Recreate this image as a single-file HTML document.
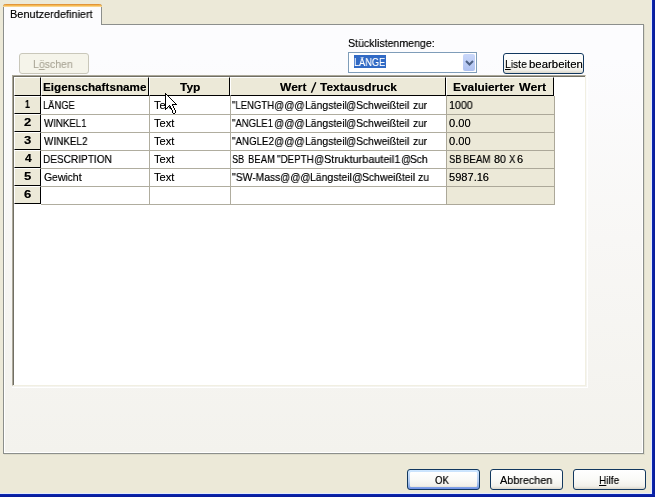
<!DOCTYPE html>
<html>
<head>
<meta charset="utf-8">
<title>Benutzerdefiniert</title>
<style>
html,body{margin:0;padding:0;}
body{width:655px;height:497px;overflow:hidden;position:relative;background:#ECE9D8;font-family:"Liberation Sans",sans-serif;font-size:11px;color:#000;}
.abs{position:absolute;}
.t{position:absolute;white-space:nowrap;line-height:13px;height:13px;transform-origin:0 0;will-change:transform;text-shadow:0 0 0 rgba(0,0,0,.55);}
.b{font-weight:bold;}
u{text-decoration:underline;}
/* window frame */
#fr{left:652px;top:0;width:3px;height:497px;background:linear-gradient(to right,#0c2cb8,#0a1fa0,#0a1c98);}
#fb{left:0;top:494px;width:655px;height:3px;background:linear-gradient(to bottom,#0c2cb8,#0a1fa0,#0a1c98);}
#lr{left:651px;top:0;width:1px;height:494px;background:#e4eafc;}
#lb{left:0;top:493px;width:652px;height:1px;background:#e4eafc;}
/* tab pane */
#pane{left:3px;top:24px;width:639px;height:428px;border:1px solid #8C8F8C;background:linear-gradient(to bottom,#FCFCFE 0%,#FCFCFE 8%,#F8F7F5 50%,#F3F2ED 100%);box-shadow:inset 1px 0 0 #fff,inset -1px 0 0 #fff,inset 0 -1px 0 #fff,1px 1px 0 rgba(120,130,110,0.12);}
#tab{left:3px;top:4px;width:97px;height:21px;border:1px solid #8C8F8C;border-bottom:none;border-top:none;background:#FCFCFE;border-radius:3px 3px 0 0;}
#tabtop{left:3px;top:4px;width:99px;height:3px;border-radius:3px 3px 0 0;background:linear-gradient(to bottom,#E2953A 0,#E2953A 1px,#F5B850 1px,#F5B850 2px,#FAD48C 2px,#FAD48C 3px);}
/* xp buttons */
.btn{position:absolute;box-sizing:border-box;border:1px solid #12385F;border-radius:3px;background:linear-gradient(to bottom,#FFFFFF 0%,#FAFAF7 50%,#F1F0EA 85%,#DAD6CA 100%);}
.btn.dis{border-color:#C9C7BA;background:#F5F4EA;}
.btn.def{background:linear-gradient(to bottom,#CEE7FF 0%,#C2DAF8 30%,#B4CDF3 60%,#8CAEE6 85%,#6F8FE6 100%);}
.btn.def i{position:absolute;left:2px;top:2px;right:2px;bottom:2px;border-radius:1px;background:linear-gradient(to bottom,#FFFFFF 0%,#FAFAF7 50%,#F1F0EA 90%,#E6E3DA 100%);}
/* combo */
#combo{left:348px;top:52px;width:127px;height:19px;border:1px solid #7F9DB9;background:#fff;}
#sel{left:354px;top:55px;width:32px;height:13px;background:#316AC5;}
#dd{left:463px;top:54px;width:12px;height:17px;border-radius:2px;background:linear-gradient(to bottom,#C9D7FA 0%,#BDCDF5 50%,#AEC1F0 100%);}
/* grid */
#gridbox{left:12px;top:75px;width:574px;height:311px;background:#fff;border-left:1px solid #ACA899;border-top:1px solid #ACA899;border-right:1px solid #F1EFE2;border-bottom:1px solid #F1EFE2;box-sizing:border-box;}
#gridin{left:13px;top:76px;width:572px;height:309px;border-left:1px solid #716F64;border-top:1px solid #716F64;box-sizing:border-box;}
#gridout{left:12px;top:75px;width:575px;height:312px;border-right:1px solid #fff;border-bottom:1px solid #fff;box-sizing:content-box;}
.hc{position:absolute;background:#ECE9D8;box-sizing:border-box;border-top:1px solid #fff;border-left:1px solid #fff;border-right:1px solid #000;border-bottom:1px solid #000;}
.vl{position:absolute;width:1px;background:#B0AD9F;}
.hl{position:absolute;height:1px;background:#B0AD9F;}
.ev{position:absolute;background:#ECE9D8;}
.gl{position:absolute;background:#ACA899;}
</style>
</head>
<body>
<div id="fr" class="abs"></div>
<div id="fb" class="abs"></div>
<div id="lr" class="abs"></div>
<div id="lb" class="abs"></div>

<div id="pane" class="abs"></div>
<div id="tab" class="abs"></div>
<div id="tabtop" class="abs"></div>

<!-- Löschen (disabled) -->
<div class="btn dis" style="left:19px;top:53px;width:70px;height:21px;"></div>

<!-- combo -->
<div id="combo" class="abs"></div>
<div id="sel" class="abs"></div>
<div id="dd" class="abs"></div>
<svg class="abs" style="left:463px;top:54px" width="12" height="17" viewBox="0 0 12 17"><path d="M3 7 L6.5 10.5 L10 7" fill="none" stroke="#4D6185" stroke-width="2"/></svg>

<!-- Liste bearbeiten -->
<div class="btn" style="left:503px;top:53px;width:81px;height:21px;"></div>

<!-- grid -->
<div id="gridbox" class="abs"></div>
<div id="gridin" class="abs"></div>
<div id="gridout" class="abs"></div>
<div id="grid" class="abs" style="left:0;top:0;">
<!-- evaluated column bg -->
<div class="ev" style="left:446px;top:96px;width:108px;height:108px;"></div>
<!-- horizontal lines body -->
<div class="hl" style="left:41px;top:114px;width:405px;"></div>
<div class="hl" style="left:41px;top:132px;width:405px;"></div>
<div class="hl" style="left:41px;top:150px;width:405px;"></div>
<div class="hl" style="left:41px;top:168px;width:405px;"></div>
<div class="hl" style="left:41px;top:186px;width:405px;"></div>
<div class="hl" style="left:41px;top:204px;width:405px;"></div>
<div class="vl" style="left:149px;top:96px;height:109px;"></div>
<div class="vl" style="left:230px;top:96px;height:109px;"></div>
<!-- evaluated col lines -->
<div class="gl" style="left:446px;top:96px;width:1px;height:109px;"></div>
<div class="gl" style="left:554px;top:96px;width:1px;height:109px;"></div>
<div class="gl" style="left:446px;top:114px;width:109px;height:1px;"></div>
<div class="gl" style="left:446px;top:132px;width:109px;height:1px;"></div>
<div class="gl" style="left:446px;top:150px;width:109px;height:1px;"></div>
<div class="gl" style="left:446px;top:168px;width:109px;height:1px;"></div>
<div class="gl" style="left:446px;top:186px;width:109px;height:1px;"></div>
<div class="gl" style="left:446px;top:204px;width:109px;height:1px;"></div>
<!-- header cells -->
<div class="hc" style="left:14px;top:77px;width:27px;height:19px;"></div>
<div class="hc" style="left:41px;top:77px;width:108px;height:19px;"></div>
<div class="hc" style="left:149px;top:77px;width:81px;height:19px;"></div>
<div class="hc" style="left:230px;top:77px;width:216px;height:19px;"></div>
<div class="hc" style="left:446px;top:77px;width:108px;height:19px;"></div>
<!-- row headers -->
<div class="hc" style="left:14px;top:96px;width:27px;height:18px;"></div>
<div class="hc" style="left:14px;top:114px;width:27px;height:18px;"></div>
<div class="hc" style="left:14px;top:132px;width:27px;height:18px;"></div>
<div class="hc" style="left:14px;top:150px;width:27px;height:18px;"></div>
<div class="hc" style="left:14px;top:168px;width:27px;height:18px;"></div>
<div class="hc" style="left:14px;top:186px;width:27px;height:18px;"></div>
</div>

<!-- bottom buttons -->
<div class="btn def" style="left:407px;top:469px;width:73px;height:21px;"><i></i></div>
<div class="btn" style="left:490px;top:469px;width:73px;height:21px;"></div>
<div class="btn" style="left:573px;top:469px;width:73px;height:21px;"></div>

<svg class="abs" style="left:308px;top:80px" width="12" height="16" viewBox="0 0 12 16"><path d="M3.4 12.8 L7.8 2.2" stroke="#000" stroke-width="1.4" fill="none"/></svg>
<div class="t" style="left:10.25px;top:8px;transform:scaleX(0.9939);">Benutzerdefiniert</div>
<div class="t" style="left:32.78px;top:58px;transform:scaleX(0.9565);color:#ACA899;text-shadow:0 0 0 #ACA89988;">L<u>ö</u>schen</div>
<div class="t" style="left:347.72px;top:37px;transform:scaleX(0.9650);">Stücklistenmenge:</div>
<div class="t" style="left:354.38px;top:56px;transform:scaleX(0.8333);color:#ffffff;text-shadow:0 0 0 #ffffff88;">LÄNGE</div>
<div class="t" style="left:505.00px;top:58px;transform:scaleX(0.9363);"><u>L</u>iste</div>
<div class="t" style="left:528.62px;top:58px;transform:scaleX(1.0356);">bearbeiten</div>
<div class="t b" style="left:43.20px;top:81px;transform:scaleX(1.0646);">Eigenschaftsname</div>
<div class="t b" style="left:180.20px;top:81px;transform:scaleX(1.0849);">Typ</div>
<div class="t b" style="left:280.30px;top:81px;transform:scaleX(1.0928);">Wert</div>
<div class="t b" style="left:320.20px;top:81px;transform:scaleX(1.0883);">Textausdruck</div>
<div class="t b" style="left:453.19px;top:81px;transform:scaleX(1.0804);">Evaluierter</div>
<div class="t b" style="left:518.70px;top:81px;transform:scaleX(1.1216);">Wert</div>
<div class="t b" style="left:25.40px;top:98px;transform:scaleX(0.8000);">1</div>
<div class="t b" style="left:24.30px;top:116px;transform:scaleX(1.1818);">2</div>
<div class="t b" style="left:24.30px;top:134px;transform:scaleX(1.1818);">3</div>
<div class="t b" style="left:24.60px;top:152px;transform:scaleX(1.0833);">4</div>
<div class="t b" style="left:24.30px;top:170px;transform:scaleX(1.1818);">5</div>
<div class="t b" style="left:24.30px;top:188px;transform:scaleX(1.1818);">6</div>
<div class="t" style="left:43.36px;top:99px;transform:scaleX(0.8500);">LÄNGE</div>
<div class="t" style="left:44.00px;top:117px;transform:scaleX(0.8796);">WINKEL1</div>
<div class="t" style="left:44.00px;top:135px;transform:scaleX(0.9005);">WINKEL2</div>
<div class="t" style="left:43.31px;top:153px;transform:scaleX(0.9156);">DESCRIPTION</div>
<div class="t" style="left:43.53px;top:171px;transform:scaleX(0.9427);">Gewicht</div>
<div class="t" style="left:153.75px;top:99px;transform:scaleX(1.0150);">Text</div>
<div class="t" style="left:153.75px;top:117px;transform:scaleX(1.0150);">Text</div>
<div class="t" style="left:153.75px;top:135px;transform:scaleX(1.0150);">Text</div>
<div class="t" style="left:153.75px;top:153px;transform:scaleX(1.0150);">Text</div>
<div class="t" style="left:153.75px;top:171px;transform:scaleX(1.0150);">Text</div>
<div class="t" style="left:232.37px;top:99px;transform:scaleX(0.8677);">"LENGTH</div>
<div class="t" style="left:274.11px;top:99px;transform:scaleX(0.9165);">@@@</div>
<div class="t" style="left:304.59px;top:99px;transform:scaleX(0.9482);">Längsteil</div>
<div class="t" style="left:346.31px;top:99px;transform:scaleX(0.9158);">@</div>
<div class="t" style="left:356.43px;top:99px;transform:scaleX(0.9491);">Schweißteil</div>
<div class="t" style="left:412.54px;top:99px;transform:scaleX(0.9288);">zur</div>
<div class="t" style="left:232.37px;top:117px;transform:scaleX(0.8670);">"ANGLE1</div>
<div class="t" style="left:274.11px;top:117px;transform:scaleX(0.9165);">@@@</div>
<div class="t" style="left:304.59px;top:117px;transform:scaleX(0.9482);">Längsteil</div>
<div class="t" style="left:346.31px;top:117px;transform:scaleX(0.9158);">@</div>
<div class="t" style="left:356.43px;top:117px;transform:scaleX(0.9491);">Schweißteil</div>
<div class="t" style="left:412.54px;top:117px;transform:scaleX(0.9288);">zur</div>
<div class="t" style="left:232.36px;top:135px;transform:scaleX(0.8865);">"ANGLE2</div>
<div class="t" style="left:274.11px;top:135px;transform:scaleX(0.9165);">@@@</div>
<div class="t" style="left:304.59px;top:135px;transform:scaleX(0.9482);">Längsteil</div>
<div class="t" style="left:346.31px;top:135px;transform:scaleX(0.9158);">@</div>
<div class="t" style="left:356.43px;top:135px;transform:scaleX(0.9491);">Schweißteil</div>
<div class="t" style="left:412.54px;top:135px;transform:scaleX(0.9288);">zur</div>
<div class="t" style="left:232.39px;top:153px;transform:scaleX(0.8296);">SB</div>
<div class="t" style="left:247.65px;top:153px;transform:scaleX(0.8644);">BEAM</div>
<div class="t" style="left:277.45px;top:153px;transform:scaleX(0.8906);">"DEPTH</div>
<div class="t" style="left:313.51px;top:153px;transform:scaleX(0.9158);">@</div>
<div class="t" style="left:323.80px;top:153px;transform:scaleX(0.9908);">Strukturbauteil1</div>
<div class="t" style="left:400.51px;top:153px;transform:scaleX(0.9158);">@</div>
<div class="t" style="left:410.14px;top:153px;transform:scaleX(0.9296);">Sch</div>
<div class="t" style="left:232.33px;top:171px;transform:scaleX(0.9426);">"SW-Mass</div>
<div class="t" style="left:280.31px;top:171px;transform:scaleX(0.9165);">@@@</div>
<div class="t" style="left:310.49px;top:171px;transform:scaleX(0.9529);">Längsteil</div>
<div class="t" style="left:351.98px;top:171px;transform:scaleX(0.9579);">@</div>
<div class="t" style="left:362.23px;top:171px;transform:scaleX(0.9455);">Schweißteil</div>
<div class="t" style="left:418.42px;top:171px;transform:scaleX(0.9524);">zu</div>
<div class="t" style="left:449.27px;top:99px;transform:scaleX(0.9720);">1000</div>
<div class="t" style="left:449.00px;top:117px;transform:scaleX(1.0098);">0.00</div>
<div class="t" style="left:449.00px;top:135px;transform:scaleX(1.0098);">0.00</div>
<div class="t" style="left:448.57px;top:153px;transform:scaleX(0.8667);">SB</div>
<div class="t" style="left:463.14px;top:153px;transform:scaleX(0.8814);">BEAM</div>
<div class="t" style="left:493.51px;top:153px;transform:scaleX(0.9778);">80</div>
<div class="t" style="left:508.98px;top:153px;transform:scaleX(0.8741);">X</div>
<div class="t" style="left:517.30px;top:153px;transform:scaleX(0.9905);">6</div>
<div class="t" style="left:449.00px;top:171px;transform:scaleX(1.0065);">5987.16</div>
<div class="t" style="left:435.26px;top:474px;transform:scaleX(0.8852);">OK</div>
<div class="t" style="left:500.00px;top:474px;transform:scaleX(0.9848);">Abbrechen</div>
<div class="t" style="left:599.30px;top:474px;transform:scaleX(0.9163);"><u>H</u>ilfe</div>
<!-- cursor -->
<svg class="abs" style="left:165px;top:93px" width="12" height="21" viewBox="0 0 12 21" shape-rendering="crispEdges"><path d="M1 2h1v1h-1zM1 3h2v1h-2zM1 4h3v1h-3zM1 5h4v1h-4zM1 6h5v1h-5zM1 7h6v1h-6zM1 8h7v1h-7zM1 9h8v1h-8zM1 10h9v1h-9zM1 11h6v1h-6zM1 12h3v1h-3zM5 12h2v1h-2zM1 13h2v1h-2zM6 13h2v1h-2zM1 14h1v1h-1zM6 14h2v1h-2zM7 15h2v1h-2zM7 16h2v1h-2zM8 17h2v1h-2zM8 18h2v1h-2zM8 19h2v1h-2z" fill="#fff"/><path d="M0 0h1v1h-1zM0 1h2v1h-2zM0 2h1v1h-1zM2 2h1v1h-1zM0 3h1v1h-1zM3 3h1v1h-1zM0 4h1v1h-1zM4 4h1v1h-1zM0 5h1v1h-1zM5 5h1v1h-1zM0 6h1v1h-1zM6 6h1v1h-1zM0 7h1v1h-1zM7 7h1v1h-1zM0 8h1v1h-1zM8 8h1v1h-1zM0 9h1v1h-1zM9 9h1v1h-1zM0 10h1v1h-1zM10 10h1v1h-1zM0 11h1v1h-1zM7 11h5v1h-5zM0 12h1v1h-1zM4 12h1v1h-1zM7 12h1v1h-1zM0 13h1v1h-1zM3 13h1v1h-1zM5 13h1v1h-1zM8 13h1v1h-1zM0 14h1v1h-1zM2 14h1v1h-1zM5 14h1v1h-1zM8 14h1v1h-1zM0 15h2v1h-2zM6 15h1v1h-1zM9 15h1v1h-1zM0 16h1v1h-1zM6 16h1v1h-1zM9 16h1v1h-1zM7 17h1v1h-1zM10 17h1v1h-1zM7 18h1v1h-1zM10 18h1v1h-1zM7 19h1v1h-1zM10 19h1v1h-1zM8 20h2v1h-2z" fill="#000"/></svg>

</body>
</html>
